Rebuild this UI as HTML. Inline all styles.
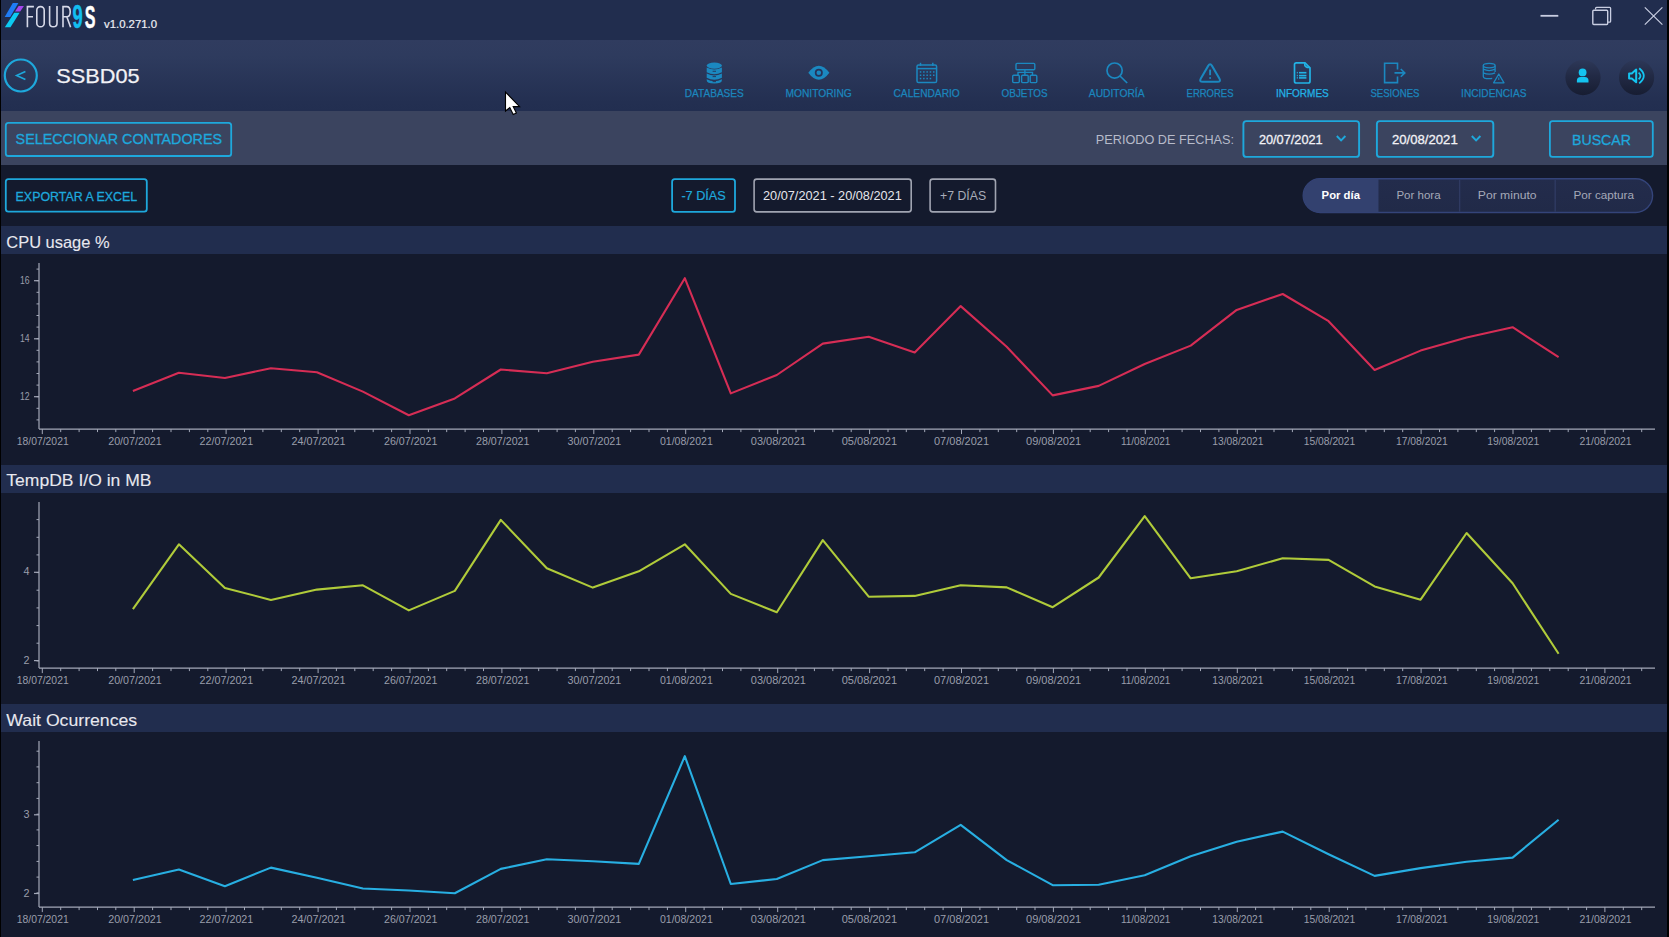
<!DOCTYPE html>
<html><head><meta charset="utf-8"><title>FOUR9S</title>
<style>
html,body{margin:0;padding:0;}
body{width:1669px;height:937px;overflow:hidden;background:#141a2d;position:relative;font-family:"Liberation Sans", sans-serif;}
.abs{position:absolute;}
#titlebar{left:0;top:0;width:1669px;height:40px;background:#212d4e;}
#header{left:0;top:40px;width:1669px;height:71px;background:linear-gradient(#303c5f 0%,#2e3b5e 22%,#232f51 88%,#222e50 100%);}
#toolbar{left:0;top:111px;width:1669px;height:54px;background:#3b445f;}
#dark{left:0;top:165px;width:1669px;height:772px;background:#141a2d;}
.band{left:0;width:1669px;height:28px;background:#212d4e;}
#lb{left:0;top:0;width:1px;height:937px;background:#000;}
#rb{left:1667px;top:0;width:2px;height:937px;background:#000;}
svg text{font-family:"Liberation Sans", sans-serif;}
</style></head><body>
<div class="abs" id="titlebar"></div>
<div class="abs" id="header"></div>
<div class="abs" id="toolbar"></div>
<div class="abs" id="dark"></div>
<div class="abs band" style="top:226px"></div>
<div class="abs band" style="top:465px"></div>
<div class="abs band" style="top:704px"></div>
<svg class="abs" style="left:0;top:0" width="1669" height="937" viewBox="0 0 1669 937">
<polygon points="12.8,3 18.4,3 10.2,17.1 4.7,17.1" fill="#1f7cf5"/>
<polygon points="18.6,6 23.9,6 20.2,11.6 15,11.6" fill="#a646ee"/>
<polygon points="14.2,12.8 19.6,12.8 10.5,27.3 4.8,27.3" fill="#0ccaf2"/>
<g fill="none" stroke="#d6d9e8" stroke-width="1.6"><path d="M27.4,27.2 V6.6 H33.9 M27.4,16.8 H33"/><rect x="36.8" y="6.6" width="7.4" height="20.2" rx="3.6"/><path d="M49.6,6 V23.2 Q49.6,26.8 53.3,26.8 Q57,26.8 57,23.2 V6"/><path d="M63,27.2 V6.6 H66.6 Q70.2,6.6 70.2,11.7 Q70.2,16.8 66.6,16.8 H63 M66.8,16.8 L70.6,27.2"/></g>
<text x="72.6" y="28.2" font-size="32.5" fill="#12bdf0" font-weight="bold" text-anchor="start" textLength="10.2" lengthAdjust="spacingAndGlyphs" stroke="#12bdf0" stroke-width="0.5">9</text>

<text x="84.8" y="27.8" font-size="31" fill="#ffffff" font-weight="bold" text-anchor="start" textLength="10.7" lengthAdjust="spacingAndGlyphs" stroke="#ffffff" stroke-width="0.5">S</text>

<text x="104.0" y="27.5" font-size="11" fill="#eeeff5" font-weight="normal" text-anchor="start" textLength="53.0" lengthAdjust="spacingAndGlyphs" stroke="#eeeff5" stroke-width="0.2">v1.0.271.0</text>

<line x1="1540.5" y1="15.8" x2="1558.3" y2="15.8" stroke="#c9cee2" stroke-width="1.8"/>
<path d="M1595.6,9.6 V8.2 Q1595.6,7.3 1596.5,7.3 H1609.7 Q1610.6,7.3 1610.6,8.2 V21.2 Q1610.6,22.1 1609.7,22.1 H1608" fill="none" stroke="#c9cee2" stroke-width="1.3"/>
<rect x="1592.8" y="10.2" width="14.9" height="14.3" rx="1" fill="none" stroke="#c9cee2" stroke-width="1.4"/>
<path d="M1644.8,7.4 L1662.4,24.6 M1662.4,7.4 L1644.8,24.6" stroke="#c9cee2" stroke-width="1.2"/>
<circle cx="20.8" cy="75.5" r="16" fill="none" stroke="#1ea8dc" stroke-width="2.2"/>
<path d="M25.4,71.4 L16.6,75.5 L25.4,79.5" fill="none" stroke="#1ea8dc" stroke-width="1.6"/>
<text x="56.2" y="83.0" font-size="20.2" fill="#f2f2f6" font-weight="normal" text-anchor="start" textLength="83.4" lengthAdjust="spacingAndGlyphs" stroke="#f2f2f6" stroke-width="0.25">SSBD05</text>

<text x="684.8" y="97.3" font-size="10.6" fill="#1b86bd" font-weight="normal" text-anchor="start" textLength="59.0" lengthAdjust="spacingAndGlyphs" stroke="#1b86bd" stroke-width="0.25">DATABASES</text>

<text x="785.4" y="97.3" font-size="10.6" fill="#1b86bd" font-weight="normal" text-anchor="start" textLength="66.4" lengthAdjust="spacingAndGlyphs" stroke="#1b86bd" stroke-width="0.25">MONITORING</text>

<text x="893.5" y="97.3" font-size="10.6" fill="#1b86bd" font-weight="normal" text-anchor="start" textLength="66.3" lengthAdjust="spacingAndGlyphs" stroke="#1b86bd" stroke-width="0.25">CALENDARIO</text>

<text x="1001.6" y="97.3" font-size="10.6" fill="#1b86bd" font-weight="normal" text-anchor="start" textLength="46.0" lengthAdjust="spacingAndGlyphs" stroke="#1b86bd" stroke-width="0.25">OBJETOS</text>

<text x="1088.8" y="97.3" font-size="10.6" fill="#1b86bd" font-weight="normal" text-anchor="start" textLength="55.8" lengthAdjust="spacingAndGlyphs" stroke="#1b86bd" stroke-width="0.25">AUDITORÍA</text>

<text x="1186.6" y="97.3" font-size="10.6" fill="#1b86bd" font-weight="normal" text-anchor="start" textLength="46.9" lengthAdjust="spacingAndGlyphs" stroke="#1b86bd" stroke-width="0.25">ERRORES</text>

<text x="1275.9" y="97.3" font-size="10.6" fill="#22b3e6" font-weight="normal" text-anchor="start" textLength="52.9" lengthAdjust="spacingAndGlyphs" stroke="#22b3e6" stroke-width="0.25">INFORMES</text>

<text x="1370.4" y="97.3" font-size="10.6" fill="#1b86bd" font-weight="normal" text-anchor="start" textLength="49.1" lengthAdjust="spacingAndGlyphs" stroke="#1b86bd" stroke-width="0.25">SESIONES</text>

<text x="1461.1" y="97.3" font-size="10.6" fill="#1b86bd" font-weight="normal" text-anchor="start" textLength="65.3" lengthAdjust="spacingAndGlyphs" stroke="#1b86bd" stroke-width="0.25">INCIDENCIAS</text>

<g fill="#1b88c0"><ellipse cx="714.3" cy="65.6" rx="7.6" ry="3.1"/><path d="M706.7,67.6 Q714.3,71.6 721.9,67.6 V72.2 Q714.3,76.2 706.7,72.2 Z"/><path d="M706.7,73.6 Q714.3,77.6 721.9,73.6 V77.8 Q714.3,81.8 706.7,77.8 Z"/><path d="M706.7,79.2 Q714.3,83.2 721.9,79.2 V80.2 Q721.9,83.4 714.3,83.4 Q706.7,83.4 706.7,80.2 Z"/></g>
<g fill="#253256"><rect x="712.6" y="70.8" width="3.4" height="0.9"/><rect x="712.6" y="76.2" width="3.4" height="0.9"/><rect x="712.6" y="81.2" width="3.4" height="0.9"/></g>
<path d="M808.3,72.7 Q818.8,58.6 829.4,72.7 Q818.8,86.8 808.3,72.7 Z" fill="#1b88c0"/>
<circle cx="818.8" cy="72.7" r="4" fill="#26335a"/>
<circle cx="818.8" cy="72.7" r="2.3" fill="#1b88c0"/>
<g fill="none" stroke="#1b88c0" stroke-width="1.5"><rect x="917" y="65" width="19.6" height="17.6" rx="1.6"/><line x1="917" y1="68.6" x2="936.6" y2="68.6"/><line x1="920.5" y1="62.8" x2="920.5" y2="66"/><line x1="932.8" y1="62.8" x2="932.8" y2="66"/></g>
<g fill="#1b88c0"><rect x="919.8" y="71.2" width="1.5" height="1.5"/><rect x="923.1" y="71.2" width="1.5" height="1.5"/><rect x="926.4" y="71.2" width="1.5" height="1.5"/><rect x="929.7" y="71.2" width="1.5" height="1.5"/><rect x="933.0" y="71.2" width="1.5" height="1.5"/><rect x="919.8" y="74.5" width="1.5" height="1.5"/><rect x="923.1" y="74.5" width="1.5" height="1.5"/><rect x="926.4" y="74.5" width="1.5" height="1.5"/><rect x="929.7" y="74.5" width="1.5" height="1.5"/><rect x="933.0" y="74.5" width="1.5" height="1.5"/><rect x="919.8" y="77.8" width="1.5" height="1.5"/><rect x="923.1" y="77.8" width="1.5" height="1.5"/><rect x="926.4" y="77.8" width="1.5" height="1.5"/><rect x="929.7" y="77.8" width="1.5" height="1.5"/></g>
<g fill="none" stroke="#1b88c0" stroke-width="1.4"><rect x="1016" y="63.4" width="18.8" height="6.4" rx="1"/><path d="M1024.9,69.8 V72.4 M1018,75.2 V72.4 H1032.5 V75.2 M1024.9,72.4 V75.2"/><rect x="1012.7" y="75.2" width="6.6" height="7.4" rx="1"/><rect x="1021.6" y="75.2" width="6.6" height="7.4" rx="1"/><rect x="1030.2" y="75.2" width="6.6" height="7.4" rx="1"/></g>
<g fill="none" stroke="#1b88c0" stroke-width="1.7"><circle cx="1114.6" cy="70.6" r="7.6"/><line x1="1120" y1="76" x2="1127.2" y2="83"/></g>
<path d="M1208.18,65.88 Q1210.10,62.60 1212.02,65.88 L1219.38,78.42 Q1221.30,81.70 1217.50,81.70 L1202.70,81.70 Q1198.90,81.70 1200.82,78.42 Z" fill="none" stroke="#1b88c0" stroke-width="2" stroke-linejoin="round"/>
<line x1="1210.1" y1="69.6" x2="1210.1" y2="75.2" stroke="#1b88c0" stroke-width="1.9"/><circle cx="1210.1" cy="77.9" r="1" fill="#1b88c0"/>
<path d="M1296.3,62.8 H1305 L1310,67.8 V81.2 Q1310,83 1308.2,83 H1296.3 Q1294.5,83 1294.5,81.2 V64.6 Q1294.5,62.8 1296.3,62.8 Z" fill="none" stroke="#22b3e6" stroke-width="1.7"/>
<g fill="#22b3e6"><rect x="1299" y="71.9" width="7.4" height="1.6"/><rect x="1299" y="74.8" width="7.4" height="1.6"/><rect x="1299" y="77.1" width="7.4" height="1.6"/><rect x="1296.8" y="71.9" width="1" height="1.5"/><rect x="1296.8" y="74.8" width="1" height="1.5"/><rect x="1296.8" y="77.1" width="1" height="1.5"/></g><path d="M1304.6,63.2 Q1304.2,67.8 1309.8,67.6" fill="none" stroke="#22b3e6" stroke-width="1.5"/>
<g fill="none" stroke="#1b88c0" stroke-width="1.6"><path d="M1397.5,69.6 V63.2 H1384.6 V82.6 H1397.5 V76.4"/><path d="M1394.5,72.9 H1404.6 M1400.8,69 L1404.8,72.9 L1400.8,76.8"/></g>
<g fill="none" stroke="#1b88c0" stroke-width="1.3"><ellipse cx="1489.2" cy="65.6" rx="5.9" ry="2.2"/><path d="M1483.3,65.6 V76.4 Q1483.3,78.6 1489.2,78.6 Q1491,78.6 1492.2,78.3 M1495.1,65.6 V72 M1483.3,69.2 Q1489.2,72 1495.1,69.2 M1483.3,72.8 Q1489.2,75.6 1495.1,72.8"/><path d="M1498.8,74 L1504,82.8 H1493.6 Z" stroke-linejoin="round"/></g>
<line x1="1498.8" y1="77.4" x2="1498.8" y2="80" stroke="#1b88c0" stroke-width="1"/>
<defs><linearGradient id="rb" x1="0" y1="0" x2="0" y2="1"><stop offset="0" stop-color="#2d3858"/><stop offset="0.45" stop-color="#222a45"/><stop offset="1" stop-color="#171d32"/></linearGradient><linearGradient id="seg" x1="0" y1="0" x2="0" y2="1"><stop offset="0" stop-color="#232c4c"/><stop offset="1" stop-color="#212a48"/></linearGradient></defs>
<circle cx="1583" cy="77.6" r="17.6" fill="url(#rb)"/>
<circle cx="1636.6" cy="77.5" r="17.6" fill="url(#rb)"/>
<circle cx="1582.6" cy="72.4" r="3.9" fill="#14c4f0"/>
<path d="M1576.9,82.4 V80.6 Q1576.9,77 1580.6,77 H1584.8 Q1588.5,77 1588.5,80.6 V82.4 Z" fill="#14c4f0"/>
<path d="M1629.1,73.4 H1631.8 L1636.2,69.6 V82.2 L1631.8,78.4 H1629.1 Z" fill="none" stroke="#14c4f0" stroke-width="2" stroke-linejoin="round"/>
<path d="M1638.6,72.6 Q1642.4,75.9 1638.6,79.2 M1639.2,68.2 Q1648.4,75.9 1639.2,83.4" fill="none" stroke="#14c4f0" stroke-width="1.8"/>
<rect x="5.8" y="122.8" width="225.4" height="33.2" rx="2.6" fill="none" stroke="#1ea8dc" stroke-width="1.8"/>
<text x="15.6" y="144.2" font-size="14.6" fill="#1ea8dc" font-weight="normal" text-anchor="start" textLength="206.4" lengthAdjust="spacingAndGlyphs" stroke="#1ea8dc" stroke-width="0.3">SELECCIONAR CONTADORES</text>

<text x="1095.8" y="143.6" font-size="12.6" fill="#b7bbca" font-weight="normal" text-anchor="start" textLength="138.2" lengthAdjust="spacingAndGlyphs">PERIODO DE FECHAS:</text>

<rect x="1243.4" y="121.1" width="115.7" height="35.8" rx="3" fill="none" stroke="#1ea8dc" stroke-width="1.9"/>
<text x="1258.9" y="143.6" font-size="13.4" fill="#f2f2f6" font-weight="normal" text-anchor="start" textLength="63.8" lengthAdjust="spacingAndGlyphs" stroke="#f2f2f6" stroke-width="0.3">20/07/2021</text>

<path d="M1336.8,136 L1341.1,140.4 L1345.4,136" fill="none" stroke="#1ea8dc" stroke-width="1.9"/>
<rect x="1376.9" y="121.1" width="116.4" height="35.8" rx="3" fill="none" stroke="#1ea8dc" stroke-width="1.9"/>
<text x="1392.0" y="143.6" font-size="13.4" fill="#f2f2f6" font-weight="normal" text-anchor="start" textLength="65.7" lengthAdjust="spacingAndGlyphs" stroke="#f2f2f6" stroke-width="0.3">20/08/2021</text>

<path d="M1471.8,136 L1476.1,140.4 L1480.4,136" fill="none" stroke="#1ea8dc" stroke-width="1.9"/>
<rect x="1549.9" y="121.1" width="102.9" height="35.8" rx="2.6" fill="none" stroke="#1ea8dc" stroke-width="1.8"/>
<text x="1572.0" y="144.6" font-size="15" fill="#1ea8dc" font-weight="normal" text-anchor="start" textLength="59.0" lengthAdjust="spacingAndGlyphs" stroke="#1ea8dc" stroke-width="0.3">BUSCAR</text>

<rect x="5.8" y="179.1" width="141" height="32.6" rx="2.6" fill="none" stroke="#1ea8dc" stroke-width="1.8"/>
<text x="15.6" y="200.8" font-size="13.6" fill="#1ea8dc" font-weight="normal" text-anchor="start" textLength="121.5" lengthAdjust="spacingAndGlyphs" stroke="#1ea8dc" stroke-width="0.3">EXPORTAR A EXCEL</text>

<rect x="672.1" y="179.1" width="62.9" height="32.8" rx="2.6" fill="none" stroke="#1ea8dc" stroke-width="1.8"/>
<text x="681.4" y="200.3" font-size="12.6" fill="#1ea8dc" font-weight="normal" text-anchor="start" textLength="44.4" lengthAdjust="spacingAndGlyphs" stroke="#1ea8dc" stroke-width="0.2">-7 DÍAS</text>

<rect x="754.1" y="179.1" width="157.1" height="32.8" rx="2.6" fill="none" stroke="#a0a4b1" stroke-width="1.6"/>
<text x="763.0" y="200.3" font-size="12.6" fill="#e6e6ec" font-weight="normal" text-anchor="start" textLength="138.8" lengthAdjust="spacingAndGlyphs">20/07/2021 - 20/08/2021</text>

<rect x="930.1" y="179.1" width="65.4" height="32.8" rx="2.6" fill="none" stroke="#a0a4b1" stroke-width="1.6"/>
<text x="940.1" y="200.3" font-size="12.6" fill="#a9adb9" font-weight="normal" text-anchor="start" textLength="46.0" lengthAdjust="spacingAndGlyphs">+7 DÍAS</text>

<rect x="1303.2" y="178.7" width="349.4" height="33.8" rx="16.9" fill="url(#seg)" stroke="#34447a" stroke-width="1.4"/>
<path d="M1378.5,178.7 H1320 A16.9,16.9 0 0 0 1320,212.5 H1378.5 Z" fill="#33416f"/>
<g stroke="#2f3a62" stroke-width="1.4"><line x1="1459.6" y1="179.4" x2="1459.6" y2="211.8"/><line x1="1555.2" y1="179.4" x2="1555.2" y2="211.8"/></g>
<text x="1321.6" y="199.4" font-size="11.4" fill="#ffffff" font-weight="bold" text-anchor="start" textLength="38.4" lengthAdjust="spacingAndGlyphs">Por día</text>

<text x="1396.4" y="199.4" font-size="11.4" fill="#a5a9b8" font-weight="normal" text-anchor="start" textLength="44.2" lengthAdjust="spacingAndGlyphs">Por hora</text>

<text x="1477.8" y="199.4" font-size="11.4" fill="#a5a9b8" font-weight="normal" text-anchor="start" textLength="58.8" lengthAdjust="spacingAndGlyphs">Por minuto</text>

<text x="1573.4" y="199.4" font-size="11.4" fill="#a5a9b8" font-weight="normal" text-anchor="start" textLength="60.6" lengthAdjust="spacingAndGlyphs">Por captura</text>

<text x="6.3" y="247.6" font-size="16.5" fill="#e8e8ef" font-weight="normal" text-anchor="start" textLength="103.3" lengthAdjust="spacingAndGlyphs" stroke="#e8e8ef" stroke-width="0.1">CPU usage %</text>
<line x1="39.0" y1="263" x2="39.0" y2="429.1" stroke="#a3a8b8" stroke-width="1.2"/>
<line x1="36.5" y1="269.1" x2="39.0" y2="269.1" stroke="#a3a8b8" stroke-width="1"/>
<line x1="36.5" y1="280.7" x2="39.0" y2="280.7" stroke="#a3a8b8" stroke-width="1"/>
<line x1="36.5" y1="292.3" x2="39.0" y2="292.3" stroke="#a3a8b8" stroke-width="1"/>
<line x1="36.5" y1="303.9" x2="39.0" y2="303.9" stroke="#a3a8b8" stroke-width="1"/>
<line x1="36.5" y1="315.5" x2="39.0" y2="315.5" stroke="#a3a8b8" stroke-width="1"/>
<line x1="36.5" y1="327.1" x2="39.0" y2="327.1" stroke="#a3a8b8" stroke-width="1"/>
<line x1="36.5" y1="338.7" x2="39.0" y2="338.7" stroke="#a3a8b8" stroke-width="1"/>
<line x1="36.5" y1="350.3" x2="39.0" y2="350.3" stroke="#a3a8b8" stroke-width="1"/>
<line x1="36.5" y1="361.9" x2="39.0" y2="361.9" stroke="#a3a8b8" stroke-width="1"/>
<line x1="36.5" y1="373.5" x2="39.0" y2="373.5" stroke="#a3a8b8" stroke-width="1"/>
<line x1="36.5" y1="385.1" x2="39.0" y2="385.1" stroke="#a3a8b8" stroke-width="1"/>
<line x1="36.5" y1="396.7" x2="39.0" y2="396.7" stroke="#a3a8b8" stroke-width="1"/>
<line x1="36.5" y1="408.3" x2="39.0" y2="408.3" stroke="#a3a8b8" stroke-width="1"/>
<line x1="36.5" y1="419.9" x2="39.0" y2="419.9" stroke="#a3a8b8" stroke-width="1"/>
<line x1="34.0" y1="280.7" x2="39.0" y2="280.7" stroke="#a3a8b8" stroke-width="1.2"/>
<text x="20.0" y="283.7" font-size="10.5" fill="#9a9eab" font-weight="normal" text-anchor="start" textLength="9.6" lengthAdjust="spacingAndGlyphs">16</text>
<line x1="34.0" y1="338.8" x2="39.0" y2="338.8" stroke="#a3a8b8" stroke-width="1.2"/>
<text x="20.0" y="341.8" font-size="10.5" fill="#9a9eab" font-weight="normal" text-anchor="start" textLength="9.6" lengthAdjust="spacingAndGlyphs">14</text>
<line x1="34.0" y1="396.7" x2="39.0" y2="396.7" stroke="#a3a8b8" stroke-width="1.2"/>
<text x="20.0" y="399.7" font-size="10.5" fill="#9a9eab" font-weight="normal" text-anchor="start" textLength="9.6" lengthAdjust="spacingAndGlyphs">12</text>
<line x1="39.0" y1="429.1" x2="1655" y2="429.1" stroke="#a3a8b8" stroke-width="1.4"/>
<line x1="42.3" y1="429.1" x2="42.3" y2="434.1" stroke="#a3a8b8" stroke-width="1"/>
<line x1="60.7" y1="429.1" x2="60.7" y2="432.1" stroke="#a3a8b8" stroke-width="1"/>
<line x1="79.1" y1="429.1" x2="79.1" y2="432.1" stroke="#a3a8b8" stroke-width="1"/>
<line x1="97.5" y1="429.1" x2="97.5" y2="432.1" stroke="#a3a8b8" stroke-width="1"/>
<line x1="115.8" y1="429.1" x2="115.8" y2="432.1" stroke="#a3a8b8" stroke-width="1"/>
<line x1="134.2" y1="429.1" x2="134.2" y2="434.1" stroke="#a3a8b8" stroke-width="1"/>
<line x1="152.6" y1="429.1" x2="152.6" y2="432.1" stroke="#a3a8b8" stroke-width="1"/>
<line x1="171.0" y1="429.1" x2="171.0" y2="432.1" stroke="#a3a8b8" stroke-width="1"/>
<line x1="189.4" y1="429.1" x2="189.4" y2="432.1" stroke="#a3a8b8" stroke-width="1"/>
<line x1="207.8" y1="429.1" x2="207.8" y2="432.1" stroke="#a3a8b8" stroke-width="1"/>
<line x1="226.1" y1="429.1" x2="226.1" y2="434.1" stroke="#a3a8b8" stroke-width="1"/>
<line x1="244.5" y1="429.1" x2="244.5" y2="432.1" stroke="#a3a8b8" stroke-width="1"/>
<line x1="262.9" y1="429.1" x2="262.9" y2="432.1" stroke="#a3a8b8" stroke-width="1"/>
<line x1="281.3" y1="429.1" x2="281.3" y2="432.1" stroke="#a3a8b8" stroke-width="1"/>
<line x1="299.7" y1="429.1" x2="299.7" y2="432.1" stroke="#a3a8b8" stroke-width="1"/>
<line x1="318.1" y1="429.1" x2="318.1" y2="434.1" stroke="#a3a8b8" stroke-width="1"/>
<line x1="336.4" y1="429.1" x2="336.4" y2="432.1" stroke="#a3a8b8" stroke-width="1"/>
<line x1="354.8" y1="429.1" x2="354.8" y2="432.1" stroke="#a3a8b8" stroke-width="1"/>
<line x1="373.2" y1="429.1" x2="373.2" y2="432.1" stroke="#a3a8b8" stroke-width="1"/>
<line x1="391.6" y1="429.1" x2="391.6" y2="432.1" stroke="#a3a8b8" stroke-width="1"/>
<line x1="410.0" y1="429.1" x2="410.0" y2="434.1" stroke="#a3a8b8" stroke-width="1"/>
<line x1="428.4" y1="429.1" x2="428.4" y2="432.1" stroke="#a3a8b8" stroke-width="1"/>
<line x1="446.7" y1="429.1" x2="446.7" y2="432.1" stroke="#a3a8b8" stroke-width="1"/>
<line x1="465.1" y1="429.1" x2="465.1" y2="432.1" stroke="#a3a8b8" stroke-width="1"/>
<line x1="483.5" y1="429.1" x2="483.5" y2="432.1" stroke="#a3a8b8" stroke-width="1"/>
<line x1="501.9" y1="429.1" x2="501.9" y2="434.1" stroke="#a3a8b8" stroke-width="1"/>
<line x1="520.3" y1="429.1" x2="520.3" y2="432.1" stroke="#a3a8b8" stroke-width="1"/>
<line x1="538.7" y1="429.1" x2="538.7" y2="432.1" stroke="#a3a8b8" stroke-width="1"/>
<line x1="557.1" y1="429.1" x2="557.1" y2="432.1" stroke="#a3a8b8" stroke-width="1"/>
<line x1="575.4" y1="429.1" x2="575.4" y2="432.1" stroke="#a3a8b8" stroke-width="1"/>
<line x1="593.8" y1="429.1" x2="593.8" y2="434.1" stroke="#a3a8b8" stroke-width="1"/>
<line x1="612.2" y1="429.1" x2="612.2" y2="432.1" stroke="#a3a8b8" stroke-width="1"/>
<line x1="630.6" y1="429.1" x2="630.6" y2="432.1" stroke="#a3a8b8" stroke-width="1"/>
<line x1="649.0" y1="429.1" x2="649.0" y2="432.1" stroke="#a3a8b8" stroke-width="1"/>
<line x1="667.4" y1="429.1" x2="667.4" y2="432.1" stroke="#a3a8b8" stroke-width="1"/>
<line x1="685.7" y1="429.1" x2="685.7" y2="434.1" stroke="#a3a8b8" stroke-width="1"/>
<line x1="704.1" y1="429.1" x2="704.1" y2="432.1" stroke="#a3a8b8" stroke-width="1"/>
<line x1="722.5" y1="429.1" x2="722.5" y2="432.1" stroke="#a3a8b8" stroke-width="1"/>
<line x1="740.9" y1="429.1" x2="740.9" y2="432.1" stroke="#a3a8b8" stroke-width="1"/>
<line x1="759.3" y1="429.1" x2="759.3" y2="432.1" stroke="#a3a8b8" stroke-width="1"/>
<line x1="777.7" y1="429.1" x2="777.7" y2="434.1" stroke="#a3a8b8" stroke-width="1"/>
<line x1="796.0" y1="429.1" x2="796.0" y2="432.1" stroke="#a3a8b8" stroke-width="1"/>
<line x1="814.4" y1="429.1" x2="814.4" y2="432.1" stroke="#a3a8b8" stroke-width="1"/>
<line x1="832.8" y1="429.1" x2="832.8" y2="432.1" stroke="#a3a8b8" stroke-width="1"/>
<line x1="851.2" y1="429.1" x2="851.2" y2="432.1" stroke="#a3a8b8" stroke-width="1"/>
<line x1="869.6" y1="429.1" x2="869.6" y2="434.1" stroke="#a3a8b8" stroke-width="1"/>
<line x1="888.0" y1="429.1" x2="888.0" y2="432.1" stroke="#a3a8b8" stroke-width="1"/>
<line x1="906.3" y1="429.1" x2="906.3" y2="432.1" stroke="#a3a8b8" stroke-width="1"/>
<line x1="924.7" y1="429.1" x2="924.7" y2="432.1" stroke="#a3a8b8" stroke-width="1"/>
<line x1="943.1" y1="429.1" x2="943.1" y2="432.1" stroke="#a3a8b8" stroke-width="1"/>
<line x1="961.5" y1="429.1" x2="961.5" y2="434.1" stroke="#a3a8b8" stroke-width="1"/>
<line x1="979.9" y1="429.1" x2="979.9" y2="432.1" stroke="#a3a8b8" stroke-width="1"/>
<line x1="998.3" y1="429.1" x2="998.3" y2="432.1" stroke="#a3a8b8" stroke-width="1"/>
<line x1="1016.7" y1="429.1" x2="1016.7" y2="432.1" stroke="#a3a8b8" stroke-width="1"/>
<line x1="1035.0" y1="429.1" x2="1035.0" y2="432.1" stroke="#a3a8b8" stroke-width="1"/>
<line x1="1053.4" y1="429.1" x2="1053.4" y2="434.1" stroke="#a3a8b8" stroke-width="1"/>
<line x1="1071.8" y1="429.1" x2="1071.8" y2="432.1" stroke="#a3a8b8" stroke-width="1"/>
<line x1="1090.2" y1="429.1" x2="1090.2" y2="432.1" stroke="#a3a8b8" stroke-width="1"/>
<line x1="1108.6" y1="429.1" x2="1108.6" y2="432.1" stroke="#a3a8b8" stroke-width="1"/>
<line x1="1127.0" y1="429.1" x2="1127.0" y2="432.1" stroke="#a3a8b8" stroke-width="1"/>
<line x1="1145.3" y1="429.1" x2="1145.3" y2="434.1" stroke="#a3a8b8" stroke-width="1"/>
<line x1="1163.7" y1="429.1" x2="1163.7" y2="432.1" stroke="#a3a8b8" stroke-width="1"/>
<line x1="1182.1" y1="429.1" x2="1182.1" y2="432.1" stroke="#a3a8b8" stroke-width="1"/>
<line x1="1200.5" y1="429.1" x2="1200.5" y2="432.1" stroke="#a3a8b8" stroke-width="1"/>
<line x1="1218.9" y1="429.1" x2="1218.9" y2="432.1" stroke="#a3a8b8" stroke-width="1"/>
<line x1="1237.3" y1="429.1" x2="1237.3" y2="434.1" stroke="#a3a8b8" stroke-width="1"/>
<line x1="1255.6" y1="429.1" x2="1255.6" y2="432.1" stroke="#a3a8b8" stroke-width="1"/>
<line x1="1274.0" y1="429.1" x2="1274.0" y2="432.1" stroke="#a3a8b8" stroke-width="1"/>
<line x1="1292.4" y1="429.1" x2="1292.4" y2="432.1" stroke="#a3a8b8" stroke-width="1"/>
<line x1="1310.8" y1="429.1" x2="1310.8" y2="432.1" stroke="#a3a8b8" stroke-width="1"/>
<line x1="1329.2" y1="429.1" x2="1329.2" y2="434.1" stroke="#a3a8b8" stroke-width="1"/>
<line x1="1347.6" y1="429.1" x2="1347.6" y2="432.1" stroke="#a3a8b8" stroke-width="1"/>
<line x1="1365.9" y1="429.1" x2="1365.9" y2="432.1" stroke="#a3a8b8" stroke-width="1"/>
<line x1="1384.3" y1="429.1" x2="1384.3" y2="432.1" stroke="#a3a8b8" stroke-width="1"/>
<line x1="1402.7" y1="429.1" x2="1402.7" y2="432.1" stroke="#a3a8b8" stroke-width="1"/>
<line x1="1421.1" y1="429.1" x2="1421.1" y2="434.1" stroke="#a3a8b8" stroke-width="1"/>
<line x1="1439.5" y1="429.1" x2="1439.5" y2="432.1" stroke="#a3a8b8" stroke-width="1"/>
<line x1="1457.9" y1="429.1" x2="1457.9" y2="432.1" stroke="#a3a8b8" stroke-width="1"/>
<line x1="1476.3" y1="429.1" x2="1476.3" y2="432.1" stroke="#a3a8b8" stroke-width="1"/>
<line x1="1494.6" y1="429.1" x2="1494.6" y2="432.1" stroke="#a3a8b8" stroke-width="1"/>
<line x1="1513.0" y1="429.1" x2="1513.0" y2="434.1" stroke="#a3a8b8" stroke-width="1"/>
<line x1="1531.4" y1="429.1" x2="1531.4" y2="432.1" stroke="#a3a8b8" stroke-width="1"/>
<line x1="1549.8" y1="429.1" x2="1549.8" y2="432.1" stroke="#a3a8b8" stroke-width="1"/>
<line x1="1568.2" y1="429.1" x2="1568.2" y2="432.1" stroke="#a3a8b8" stroke-width="1"/>
<line x1="1586.6" y1="429.1" x2="1586.6" y2="432.1" stroke="#a3a8b8" stroke-width="1"/>
<line x1="1604.9" y1="429.1" x2="1604.9" y2="434.1" stroke="#a3a8b8" stroke-width="1"/>
<line x1="1623.3" y1="429.1" x2="1623.3" y2="432.1" stroke="#a3a8b8" stroke-width="1"/>
<line x1="1641.7" y1="429.1" x2="1641.7" y2="432.1" stroke="#a3a8b8" stroke-width="1"/>
<text x="16.7" y="445.0" font-size="11" fill="#9a9eab" font-weight="normal" text-anchor="start" textLength="52.0" lengthAdjust="spacingAndGlyphs">18/07/2021</text>
<text x="108.2" y="445.0" font-size="11" fill="#9a9eab" font-weight="normal" text-anchor="start" textLength="53.6" lengthAdjust="spacingAndGlyphs">20/07/2021</text>
<text x="199.6" y="445.0" font-size="11" fill="#9a9eab" font-weight="normal" text-anchor="start" textLength="53.7" lengthAdjust="spacingAndGlyphs">22/07/2021</text>
<text x="291.4" y="445.0" font-size="11" fill="#9a9eab" font-weight="normal" text-anchor="start" textLength="54.0" lengthAdjust="spacingAndGlyphs">24/07/2021</text>
<text x="384.0" y="445.0" font-size="11" fill="#9a9eab" font-weight="normal" text-anchor="start" textLength="53.4" lengthAdjust="spacingAndGlyphs">26/07/2021</text>
<text x="476.0" y="445.0" font-size="11" fill="#9a9eab" font-weight="normal" text-anchor="start" textLength="53.5" lengthAdjust="spacingAndGlyphs">28/07/2021</text>
<text x="567.6" y="445.0" font-size="11" fill="#9a9eab" font-weight="normal" text-anchor="start" textLength="53.7" lengthAdjust="spacingAndGlyphs">30/07/2021</text>
<text x="659.9" y="445.0" font-size="11" fill="#9a9eab" font-weight="normal" text-anchor="start" textLength="52.9" lengthAdjust="spacingAndGlyphs">01/08/2021</text>
<text x="750.8" y="445.0" font-size="11" fill="#9a9eab" font-weight="normal" text-anchor="start" textLength="55.1" lengthAdjust="spacingAndGlyphs">03/08/2021</text>
<text x="841.7" y="445.0" font-size="11" fill="#9a9eab" font-weight="normal" text-anchor="start" textLength="55.4" lengthAdjust="spacingAndGlyphs">05/08/2021</text>
<text x="934.0" y="445.0" font-size="11" fill="#9a9eab" font-weight="normal" text-anchor="start" textLength="55.0" lengthAdjust="spacingAndGlyphs">07/08/2021</text>
<text x="1026.0" y="445.0" font-size="11" fill="#9a9eab" font-weight="normal" text-anchor="start" textLength="55.2" lengthAdjust="spacingAndGlyphs">09/08/2021</text>
<text x="1120.9" y="445.0" font-size="11" fill="#9a9eab" font-weight="normal" text-anchor="start" textLength="49.5" lengthAdjust="spacingAndGlyphs">11/08/2021</text>
<text x="1212.3" y="445.0" font-size="11" fill="#9a9eab" font-weight="normal" text-anchor="start" textLength="51.2" lengthAdjust="spacingAndGlyphs">13/08/2021</text>
<text x="1303.8" y="445.0" font-size="11" fill="#9a9eab" font-weight="normal" text-anchor="start" textLength="51.5" lengthAdjust="spacingAndGlyphs">15/08/2021</text>
<text x="1395.9" y="445.0" font-size="11" fill="#9a9eab" font-weight="normal" text-anchor="start" textLength="51.8" lengthAdjust="spacingAndGlyphs">17/08/2021</text>
<text x="1487.3" y="445.0" font-size="11" fill="#9a9eab" font-weight="normal" text-anchor="start" textLength="52.0" lengthAdjust="spacingAndGlyphs">19/08/2021</text>
<text x="1579.4" y="445.0" font-size="11" fill="#9a9eab" font-weight="normal" text-anchor="start" textLength="52.2" lengthAdjust="spacingAndGlyphs">21/08/2021</text>
<polyline points="132.9,391.1 178.9,372.8 224.9,378.0 270.9,368.2 316.9,372.3 362.9,391.6 408.8,415.3 454.8,398.4 500.8,369.5 546.8,373.3 592.8,361.7 638.8,354.6 684.8,278.2 730.8,393.4 776.8,375.0 822.8,343.6 868.7,336.8 914.7,352.4 960.7,306.1 1006.7,346.8 1052.7,395.4 1098.7,385.9 1144.7,364.0 1190.7,345.6 1236.7,309.9 1282.7,294.0 1328.6,321.2 1374.6,370.0 1420.6,350.6 1466.6,337.5 1512.6,327.2 1558.6,357.2" fill="none" stroke="#d62d55" stroke-width="2.1" stroke-linejoin="round"/>

<text x="6.3" y="486.1" font-size="16.5" fill="#e8e8ef" font-weight="normal" text-anchor="start" textLength="145.2" lengthAdjust="spacingAndGlyphs" stroke="#e8e8ef" stroke-width="0.1">TempDB I/O in MB</text>
<line x1="39.0" y1="502" x2="39.0" y2="668.1" stroke="#a3a8b8" stroke-width="1.2"/>
<line x1="36.5" y1="519.6" x2="39.0" y2="519.6" stroke="#a3a8b8" stroke-width="1"/>
<line x1="36.5" y1="537.3" x2="39.0" y2="537.3" stroke="#a3a8b8" stroke-width="1"/>
<line x1="36.5" y1="554.9" x2="39.0" y2="554.9" stroke="#a3a8b8" stroke-width="1"/>
<line x1="36.5" y1="572.6" x2="39.0" y2="572.6" stroke="#a3a8b8" stroke-width="1"/>
<line x1="36.5" y1="590.2" x2="39.0" y2="590.2" stroke="#a3a8b8" stroke-width="1"/>
<line x1="36.5" y1="607.9" x2="39.0" y2="607.9" stroke="#a3a8b8" stroke-width="1"/>
<line x1="36.5" y1="625.6" x2="39.0" y2="625.6" stroke="#a3a8b8" stroke-width="1"/>
<line x1="36.5" y1="643.2" x2="39.0" y2="643.2" stroke="#a3a8b8" stroke-width="1"/>
<line x1="36.5" y1="660.9" x2="39.0" y2="660.9" stroke="#a3a8b8" stroke-width="1"/>
<line x1="34.0" y1="572.3" x2="39.0" y2="572.3" stroke="#a3a8b8" stroke-width="1.2"/>
<text x="23.6" y="575.3" font-size="10.5" fill="#9a9eab" font-weight="normal" text-anchor="start" textLength="6.0" lengthAdjust="spacingAndGlyphs">4</text>
<line x1="34.0" y1="660.6" x2="39.0" y2="660.6" stroke="#a3a8b8" stroke-width="1.2"/>
<text x="23.6" y="663.6" font-size="10.5" fill="#9a9eab" font-weight="normal" text-anchor="start" textLength="6.0" lengthAdjust="spacingAndGlyphs">2</text>
<line x1="39.0" y1="668.1" x2="1655" y2="668.1" stroke="#a3a8b8" stroke-width="1.4"/>
<line x1="42.3" y1="668.1" x2="42.3" y2="673.1" stroke="#a3a8b8" stroke-width="1"/>
<line x1="60.7" y1="668.1" x2="60.7" y2="671.1" stroke="#a3a8b8" stroke-width="1"/>
<line x1="79.1" y1="668.1" x2="79.1" y2="671.1" stroke="#a3a8b8" stroke-width="1"/>
<line x1="97.5" y1="668.1" x2="97.5" y2="671.1" stroke="#a3a8b8" stroke-width="1"/>
<line x1="115.8" y1="668.1" x2="115.8" y2="671.1" stroke="#a3a8b8" stroke-width="1"/>
<line x1="134.2" y1="668.1" x2="134.2" y2="673.1" stroke="#a3a8b8" stroke-width="1"/>
<line x1="152.6" y1="668.1" x2="152.6" y2="671.1" stroke="#a3a8b8" stroke-width="1"/>
<line x1="171.0" y1="668.1" x2="171.0" y2="671.1" stroke="#a3a8b8" stroke-width="1"/>
<line x1="189.4" y1="668.1" x2="189.4" y2="671.1" stroke="#a3a8b8" stroke-width="1"/>
<line x1="207.8" y1="668.1" x2="207.8" y2="671.1" stroke="#a3a8b8" stroke-width="1"/>
<line x1="226.1" y1="668.1" x2="226.1" y2="673.1" stroke="#a3a8b8" stroke-width="1"/>
<line x1="244.5" y1="668.1" x2="244.5" y2="671.1" stroke="#a3a8b8" stroke-width="1"/>
<line x1="262.9" y1="668.1" x2="262.9" y2="671.1" stroke="#a3a8b8" stroke-width="1"/>
<line x1="281.3" y1="668.1" x2="281.3" y2="671.1" stroke="#a3a8b8" stroke-width="1"/>
<line x1="299.7" y1="668.1" x2="299.7" y2="671.1" stroke="#a3a8b8" stroke-width="1"/>
<line x1="318.1" y1="668.1" x2="318.1" y2="673.1" stroke="#a3a8b8" stroke-width="1"/>
<line x1="336.4" y1="668.1" x2="336.4" y2="671.1" stroke="#a3a8b8" stroke-width="1"/>
<line x1="354.8" y1="668.1" x2="354.8" y2="671.1" stroke="#a3a8b8" stroke-width="1"/>
<line x1="373.2" y1="668.1" x2="373.2" y2="671.1" stroke="#a3a8b8" stroke-width="1"/>
<line x1="391.6" y1="668.1" x2="391.6" y2="671.1" stroke="#a3a8b8" stroke-width="1"/>
<line x1="410.0" y1="668.1" x2="410.0" y2="673.1" stroke="#a3a8b8" stroke-width="1"/>
<line x1="428.4" y1="668.1" x2="428.4" y2="671.1" stroke="#a3a8b8" stroke-width="1"/>
<line x1="446.7" y1="668.1" x2="446.7" y2="671.1" stroke="#a3a8b8" stroke-width="1"/>
<line x1="465.1" y1="668.1" x2="465.1" y2="671.1" stroke="#a3a8b8" stroke-width="1"/>
<line x1="483.5" y1="668.1" x2="483.5" y2="671.1" stroke="#a3a8b8" stroke-width="1"/>
<line x1="501.9" y1="668.1" x2="501.9" y2="673.1" stroke="#a3a8b8" stroke-width="1"/>
<line x1="520.3" y1="668.1" x2="520.3" y2="671.1" stroke="#a3a8b8" stroke-width="1"/>
<line x1="538.7" y1="668.1" x2="538.7" y2="671.1" stroke="#a3a8b8" stroke-width="1"/>
<line x1="557.1" y1="668.1" x2="557.1" y2="671.1" stroke="#a3a8b8" stroke-width="1"/>
<line x1="575.4" y1="668.1" x2="575.4" y2="671.1" stroke="#a3a8b8" stroke-width="1"/>
<line x1="593.8" y1="668.1" x2="593.8" y2="673.1" stroke="#a3a8b8" stroke-width="1"/>
<line x1="612.2" y1="668.1" x2="612.2" y2="671.1" stroke="#a3a8b8" stroke-width="1"/>
<line x1="630.6" y1="668.1" x2="630.6" y2="671.1" stroke="#a3a8b8" stroke-width="1"/>
<line x1="649.0" y1="668.1" x2="649.0" y2="671.1" stroke="#a3a8b8" stroke-width="1"/>
<line x1="667.4" y1="668.1" x2="667.4" y2="671.1" stroke="#a3a8b8" stroke-width="1"/>
<line x1="685.7" y1="668.1" x2="685.7" y2="673.1" stroke="#a3a8b8" stroke-width="1"/>
<line x1="704.1" y1="668.1" x2="704.1" y2="671.1" stroke="#a3a8b8" stroke-width="1"/>
<line x1="722.5" y1="668.1" x2="722.5" y2="671.1" stroke="#a3a8b8" stroke-width="1"/>
<line x1="740.9" y1="668.1" x2="740.9" y2="671.1" stroke="#a3a8b8" stroke-width="1"/>
<line x1="759.3" y1="668.1" x2="759.3" y2="671.1" stroke="#a3a8b8" stroke-width="1"/>
<line x1="777.7" y1="668.1" x2="777.7" y2="673.1" stroke="#a3a8b8" stroke-width="1"/>
<line x1="796.0" y1="668.1" x2="796.0" y2="671.1" stroke="#a3a8b8" stroke-width="1"/>
<line x1="814.4" y1="668.1" x2="814.4" y2="671.1" stroke="#a3a8b8" stroke-width="1"/>
<line x1="832.8" y1="668.1" x2="832.8" y2="671.1" stroke="#a3a8b8" stroke-width="1"/>
<line x1="851.2" y1="668.1" x2="851.2" y2="671.1" stroke="#a3a8b8" stroke-width="1"/>
<line x1="869.6" y1="668.1" x2="869.6" y2="673.1" stroke="#a3a8b8" stroke-width="1"/>
<line x1="888.0" y1="668.1" x2="888.0" y2="671.1" stroke="#a3a8b8" stroke-width="1"/>
<line x1="906.3" y1="668.1" x2="906.3" y2="671.1" stroke="#a3a8b8" stroke-width="1"/>
<line x1="924.7" y1="668.1" x2="924.7" y2="671.1" stroke="#a3a8b8" stroke-width="1"/>
<line x1="943.1" y1="668.1" x2="943.1" y2="671.1" stroke="#a3a8b8" stroke-width="1"/>
<line x1="961.5" y1="668.1" x2="961.5" y2="673.1" stroke="#a3a8b8" stroke-width="1"/>
<line x1="979.9" y1="668.1" x2="979.9" y2="671.1" stroke="#a3a8b8" stroke-width="1"/>
<line x1="998.3" y1="668.1" x2="998.3" y2="671.1" stroke="#a3a8b8" stroke-width="1"/>
<line x1="1016.7" y1="668.1" x2="1016.7" y2="671.1" stroke="#a3a8b8" stroke-width="1"/>
<line x1="1035.0" y1="668.1" x2="1035.0" y2="671.1" stroke="#a3a8b8" stroke-width="1"/>
<line x1="1053.4" y1="668.1" x2="1053.4" y2="673.1" stroke="#a3a8b8" stroke-width="1"/>
<line x1="1071.8" y1="668.1" x2="1071.8" y2="671.1" stroke="#a3a8b8" stroke-width="1"/>
<line x1="1090.2" y1="668.1" x2="1090.2" y2="671.1" stroke="#a3a8b8" stroke-width="1"/>
<line x1="1108.6" y1="668.1" x2="1108.6" y2="671.1" stroke="#a3a8b8" stroke-width="1"/>
<line x1="1127.0" y1="668.1" x2="1127.0" y2="671.1" stroke="#a3a8b8" stroke-width="1"/>
<line x1="1145.3" y1="668.1" x2="1145.3" y2="673.1" stroke="#a3a8b8" stroke-width="1"/>
<line x1="1163.7" y1="668.1" x2="1163.7" y2="671.1" stroke="#a3a8b8" stroke-width="1"/>
<line x1="1182.1" y1="668.1" x2="1182.1" y2="671.1" stroke="#a3a8b8" stroke-width="1"/>
<line x1="1200.5" y1="668.1" x2="1200.5" y2="671.1" stroke="#a3a8b8" stroke-width="1"/>
<line x1="1218.9" y1="668.1" x2="1218.9" y2="671.1" stroke="#a3a8b8" stroke-width="1"/>
<line x1="1237.3" y1="668.1" x2="1237.3" y2="673.1" stroke="#a3a8b8" stroke-width="1"/>
<line x1="1255.6" y1="668.1" x2="1255.6" y2="671.1" stroke="#a3a8b8" stroke-width="1"/>
<line x1="1274.0" y1="668.1" x2="1274.0" y2="671.1" stroke="#a3a8b8" stroke-width="1"/>
<line x1="1292.4" y1="668.1" x2="1292.4" y2="671.1" stroke="#a3a8b8" stroke-width="1"/>
<line x1="1310.8" y1="668.1" x2="1310.8" y2="671.1" stroke="#a3a8b8" stroke-width="1"/>
<line x1="1329.2" y1="668.1" x2="1329.2" y2="673.1" stroke="#a3a8b8" stroke-width="1"/>
<line x1="1347.6" y1="668.1" x2="1347.6" y2="671.1" stroke="#a3a8b8" stroke-width="1"/>
<line x1="1365.9" y1="668.1" x2="1365.9" y2="671.1" stroke="#a3a8b8" stroke-width="1"/>
<line x1="1384.3" y1="668.1" x2="1384.3" y2="671.1" stroke="#a3a8b8" stroke-width="1"/>
<line x1="1402.7" y1="668.1" x2="1402.7" y2="671.1" stroke="#a3a8b8" stroke-width="1"/>
<line x1="1421.1" y1="668.1" x2="1421.1" y2="673.1" stroke="#a3a8b8" stroke-width="1"/>
<line x1="1439.5" y1="668.1" x2="1439.5" y2="671.1" stroke="#a3a8b8" stroke-width="1"/>
<line x1="1457.9" y1="668.1" x2="1457.9" y2="671.1" stroke="#a3a8b8" stroke-width="1"/>
<line x1="1476.3" y1="668.1" x2="1476.3" y2="671.1" stroke="#a3a8b8" stroke-width="1"/>
<line x1="1494.6" y1="668.1" x2="1494.6" y2="671.1" stroke="#a3a8b8" stroke-width="1"/>
<line x1="1513.0" y1="668.1" x2="1513.0" y2="673.1" stroke="#a3a8b8" stroke-width="1"/>
<line x1="1531.4" y1="668.1" x2="1531.4" y2="671.1" stroke="#a3a8b8" stroke-width="1"/>
<line x1="1549.8" y1="668.1" x2="1549.8" y2="671.1" stroke="#a3a8b8" stroke-width="1"/>
<line x1="1568.2" y1="668.1" x2="1568.2" y2="671.1" stroke="#a3a8b8" stroke-width="1"/>
<line x1="1586.6" y1="668.1" x2="1586.6" y2="671.1" stroke="#a3a8b8" stroke-width="1"/>
<line x1="1604.9" y1="668.1" x2="1604.9" y2="673.1" stroke="#a3a8b8" stroke-width="1"/>
<line x1="1623.3" y1="668.1" x2="1623.3" y2="671.1" stroke="#a3a8b8" stroke-width="1"/>
<line x1="1641.7" y1="668.1" x2="1641.7" y2="671.1" stroke="#a3a8b8" stroke-width="1"/>
<text x="16.7" y="684.0" font-size="11" fill="#9a9eab" font-weight="normal" text-anchor="start" textLength="52.0" lengthAdjust="spacingAndGlyphs">18/07/2021</text>
<text x="108.2" y="684.0" font-size="11" fill="#9a9eab" font-weight="normal" text-anchor="start" textLength="53.6" lengthAdjust="spacingAndGlyphs">20/07/2021</text>
<text x="199.6" y="684.0" font-size="11" fill="#9a9eab" font-weight="normal" text-anchor="start" textLength="53.7" lengthAdjust="spacingAndGlyphs">22/07/2021</text>
<text x="291.4" y="684.0" font-size="11" fill="#9a9eab" font-weight="normal" text-anchor="start" textLength="54.0" lengthAdjust="spacingAndGlyphs">24/07/2021</text>
<text x="384.0" y="684.0" font-size="11" fill="#9a9eab" font-weight="normal" text-anchor="start" textLength="53.4" lengthAdjust="spacingAndGlyphs">26/07/2021</text>
<text x="476.0" y="684.0" font-size="11" fill="#9a9eab" font-weight="normal" text-anchor="start" textLength="53.5" lengthAdjust="spacingAndGlyphs">28/07/2021</text>
<text x="567.6" y="684.0" font-size="11" fill="#9a9eab" font-weight="normal" text-anchor="start" textLength="53.7" lengthAdjust="spacingAndGlyphs">30/07/2021</text>
<text x="659.9" y="684.0" font-size="11" fill="#9a9eab" font-weight="normal" text-anchor="start" textLength="52.9" lengthAdjust="spacingAndGlyphs">01/08/2021</text>
<text x="750.8" y="684.0" font-size="11" fill="#9a9eab" font-weight="normal" text-anchor="start" textLength="55.1" lengthAdjust="spacingAndGlyphs">03/08/2021</text>
<text x="841.7" y="684.0" font-size="11" fill="#9a9eab" font-weight="normal" text-anchor="start" textLength="55.4" lengthAdjust="spacingAndGlyphs">05/08/2021</text>
<text x="934.0" y="684.0" font-size="11" fill="#9a9eab" font-weight="normal" text-anchor="start" textLength="55.0" lengthAdjust="spacingAndGlyphs">07/08/2021</text>
<text x="1026.0" y="684.0" font-size="11" fill="#9a9eab" font-weight="normal" text-anchor="start" textLength="55.2" lengthAdjust="spacingAndGlyphs">09/08/2021</text>
<text x="1120.9" y="684.0" font-size="11" fill="#9a9eab" font-weight="normal" text-anchor="start" textLength="49.5" lengthAdjust="spacingAndGlyphs">11/08/2021</text>
<text x="1212.3" y="684.0" font-size="11" fill="#9a9eab" font-weight="normal" text-anchor="start" textLength="51.2" lengthAdjust="spacingAndGlyphs">13/08/2021</text>
<text x="1303.8" y="684.0" font-size="11" fill="#9a9eab" font-weight="normal" text-anchor="start" textLength="51.5" lengthAdjust="spacingAndGlyphs">15/08/2021</text>
<text x="1395.9" y="684.0" font-size="11" fill="#9a9eab" font-weight="normal" text-anchor="start" textLength="51.8" lengthAdjust="spacingAndGlyphs">17/08/2021</text>
<text x="1487.3" y="684.0" font-size="11" fill="#9a9eab" font-weight="normal" text-anchor="start" textLength="52.0" lengthAdjust="spacingAndGlyphs">19/08/2021</text>
<text x="1579.4" y="684.0" font-size="11" fill="#9a9eab" font-weight="normal" text-anchor="start" textLength="52.2" lengthAdjust="spacingAndGlyphs">21/08/2021</text>
<polyline points="132.9,609.2 178.9,544.3 224.9,587.9 270.9,599.9 316.9,589.6 362.9,585.3 408.8,610.4 454.8,590.9 500.8,519.9 546.8,568.2 592.8,587.6 638.8,571.3 684.8,544.3 730.8,593.9 776.8,612.3 822.8,540.1 868.7,596.7 914.7,595.9 960.7,585.3 1006.7,587.4 1052.7,607.2 1098.7,577.5 1144.7,516.1 1190.7,578.3 1236.7,571.3 1282.7,558.2 1328.6,559.9 1374.6,586.4 1420.6,599.7 1466.6,533.0 1512.6,583.3 1558.6,653.8" fill="none" stroke="#b0cb3a" stroke-width="2.1" stroke-linejoin="round"/>

<text x="6.3" y="725.8" font-size="16.5" fill="#e8e8ef" font-weight="normal" text-anchor="start" textLength="130.9" lengthAdjust="spacingAndGlyphs" stroke="#e8e8ef" stroke-width="0.1">Wait Ocurrences</text>
<line x1="39.0" y1="741" x2="39.0" y2="907.1" stroke="#a3a8b8" stroke-width="1.2"/>
<line x1="36.5" y1="751.2" x2="39.0" y2="751.2" stroke="#a3a8b8" stroke-width="1"/>
<line x1="36.5" y1="766.9" x2="39.0" y2="766.9" stroke="#a3a8b8" stroke-width="1"/>
<line x1="36.5" y1="782.7" x2="39.0" y2="782.7" stroke="#a3a8b8" stroke-width="1"/>
<line x1="36.5" y1="798.4" x2="39.0" y2="798.4" stroke="#a3a8b8" stroke-width="1"/>
<line x1="36.5" y1="814.2" x2="39.0" y2="814.2" stroke="#a3a8b8" stroke-width="1"/>
<line x1="36.5" y1="829.9" x2="39.0" y2="829.9" stroke="#a3a8b8" stroke-width="1"/>
<line x1="36.5" y1="845.6" x2="39.0" y2="845.6" stroke="#a3a8b8" stroke-width="1"/>
<line x1="36.5" y1="861.4" x2="39.0" y2="861.4" stroke="#a3a8b8" stroke-width="1"/>
<line x1="36.5" y1="877.1" x2="39.0" y2="877.1" stroke="#a3a8b8" stroke-width="1"/>
<line x1="36.5" y1="892.9" x2="39.0" y2="892.9" stroke="#a3a8b8" stroke-width="1"/>
<line x1="34.0" y1="814.8" x2="39.0" y2="814.8" stroke="#a3a8b8" stroke-width="1.2"/>
<text x="23.6" y="817.8" font-size="10.5" fill="#9a9eab" font-weight="normal" text-anchor="start" textLength="6.0" lengthAdjust="spacingAndGlyphs">3</text>
<line x1="34.0" y1="893.5" x2="39.0" y2="893.5" stroke="#a3a8b8" stroke-width="1.2"/>
<text x="23.6" y="896.5" font-size="10.5" fill="#9a9eab" font-weight="normal" text-anchor="start" textLength="6.0" lengthAdjust="spacingAndGlyphs">2</text>
<line x1="39.0" y1="907.1" x2="1655" y2="907.1" stroke="#a3a8b8" stroke-width="1.4"/>
<line x1="42.3" y1="907.1" x2="42.3" y2="912.1" stroke="#a3a8b8" stroke-width="1"/>
<line x1="60.7" y1="907.1" x2="60.7" y2="910.1" stroke="#a3a8b8" stroke-width="1"/>
<line x1="79.1" y1="907.1" x2="79.1" y2="910.1" stroke="#a3a8b8" stroke-width="1"/>
<line x1="97.5" y1="907.1" x2="97.5" y2="910.1" stroke="#a3a8b8" stroke-width="1"/>
<line x1="115.8" y1="907.1" x2="115.8" y2="910.1" stroke="#a3a8b8" stroke-width="1"/>
<line x1="134.2" y1="907.1" x2="134.2" y2="912.1" stroke="#a3a8b8" stroke-width="1"/>
<line x1="152.6" y1="907.1" x2="152.6" y2="910.1" stroke="#a3a8b8" stroke-width="1"/>
<line x1="171.0" y1="907.1" x2="171.0" y2="910.1" stroke="#a3a8b8" stroke-width="1"/>
<line x1="189.4" y1="907.1" x2="189.4" y2="910.1" stroke="#a3a8b8" stroke-width="1"/>
<line x1="207.8" y1="907.1" x2="207.8" y2="910.1" stroke="#a3a8b8" stroke-width="1"/>
<line x1="226.1" y1="907.1" x2="226.1" y2="912.1" stroke="#a3a8b8" stroke-width="1"/>
<line x1="244.5" y1="907.1" x2="244.5" y2="910.1" stroke="#a3a8b8" stroke-width="1"/>
<line x1="262.9" y1="907.1" x2="262.9" y2="910.1" stroke="#a3a8b8" stroke-width="1"/>
<line x1="281.3" y1="907.1" x2="281.3" y2="910.1" stroke="#a3a8b8" stroke-width="1"/>
<line x1="299.7" y1="907.1" x2="299.7" y2="910.1" stroke="#a3a8b8" stroke-width="1"/>
<line x1="318.1" y1="907.1" x2="318.1" y2="912.1" stroke="#a3a8b8" stroke-width="1"/>
<line x1="336.4" y1="907.1" x2="336.4" y2="910.1" stroke="#a3a8b8" stroke-width="1"/>
<line x1="354.8" y1="907.1" x2="354.8" y2="910.1" stroke="#a3a8b8" stroke-width="1"/>
<line x1="373.2" y1="907.1" x2="373.2" y2="910.1" stroke="#a3a8b8" stroke-width="1"/>
<line x1="391.6" y1="907.1" x2="391.6" y2="910.1" stroke="#a3a8b8" stroke-width="1"/>
<line x1="410.0" y1="907.1" x2="410.0" y2="912.1" stroke="#a3a8b8" stroke-width="1"/>
<line x1="428.4" y1="907.1" x2="428.4" y2="910.1" stroke="#a3a8b8" stroke-width="1"/>
<line x1="446.7" y1="907.1" x2="446.7" y2="910.1" stroke="#a3a8b8" stroke-width="1"/>
<line x1="465.1" y1="907.1" x2="465.1" y2="910.1" stroke="#a3a8b8" stroke-width="1"/>
<line x1="483.5" y1="907.1" x2="483.5" y2="910.1" stroke="#a3a8b8" stroke-width="1"/>
<line x1="501.9" y1="907.1" x2="501.9" y2="912.1" stroke="#a3a8b8" stroke-width="1"/>
<line x1="520.3" y1="907.1" x2="520.3" y2="910.1" stroke="#a3a8b8" stroke-width="1"/>
<line x1="538.7" y1="907.1" x2="538.7" y2="910.1" stroke="#a3a8b8" stroke-width="1"/>
<line x1="557.1" y1="907.1" x2="557.1" y2="910.1" stroke="#a3a8b8" stroke-width="1"/>
<line x1="575.4" y1="907.1" x2="575.4" y2="910.1" stroke="#a3a8b8" stroke-width="1"/>
<line x1="593.8" y1="907.1" x2="593.8" y2="912.1" stroke="#a3a8b8" stroke-width="1"/>
<line x1="612.2" y1="907.1" x2="612.2" y2="910.1" stroke="#a3a8b8" stroke-width="1"/>
<line x1="630.6" y1="907.1" x2="630.6" y2="910.1" stroke="#a3a8b8" stroke-width="1"/>
<line x1="649.0" y1="907.1" x2="649.0" y2="910.1" stroke="#a3a8b8" stroke-width="1"/>
<line x1="667.4" y1="907.1" x2="667.4" y2="910.1" stroke="#a3a8b8" stroke-width="1"/>
<line x1="685.7" y1="907.1" x2="685.7" y2="912.1" stroke="#a3a8b8" stroke-width="1"/>
<line x1="704.1" y1="907.1" x2="704.1" y2="910.1" stroke="#a3a8b8" stroke-width="1"/>
<line x1="722.5" y1="907.1" x2="722.5" y2="910.1" stroke="#a3a8b8" stroke-width="1"/>
<line x1="740.9" y1="907.1" x2="740.9" y2="910.1" stroke="#a3a8b8" stroke-width="1"/>
<line x1="759.3" y1="907.1" x2="759.3" y2="910.1" stroke="#a3a8b8" stroke-width="1"/>
<line x1="777.7" y1="907.1" x2="777.7" y2="912.1" stroke="#a3a8b8" stroke-width="1"/>
<line x1="796.0" y1="907.1" x2="796.0" y2="910.1" stroke="#a3a8b8" stroke-width="1"/>
<line x1="814.4" y1="907.1" x2="814.4" y2="910.1" stroke="#a3a8b8" stroke-width="1"/>
<line x1="832.8" y1="907.1" x2="832.8" y2="910.1" stroke="#a3a8b8" stroke-width="1"/>
<line x1="851.2" y1="907.1" x2="851.2" y2="910.1" stroke="#a3a8b8" stroke-width="1"/>
<line x1="869.6" y1="907.1" x2="869.6" y2="912.1" stroke="#a3a8b8" stroke-width="1"/>
<line x1="888.0" y1="907.1" x2="888.0" y2="910.1" stroke="#a3a8b8" stroke-width="1"/>
<line x1="906.3" y1="907.1" x2="906.3" y2="910.1" stroke="#a3a8b8" stroke-width="1"/>
<line x1="924.7" y1="907.1" x2="924.7" y2="910.1" stroke="#a3a8b8" stroke-width="1"/>
<line x1="943.1" y1="907.1" x2="943.1" y2="910.1" stroke="#a3a8b8" stroke-width="1"/>
<line x1="961.5" y1="907.1" x2="961.5" y2="912.1" stroke="#a3a8b8" stroke-width="1"/>
<line x1="979.9" y1="907.1" x2="979.9" y2="910.1" stroke="#a3a8b8" stroke-width="1"/>
<line x1="998.3" y1="907.1" x2="998.3" y2="910.1" stroke="#a3a8b8" stroke-width="1"/>
<line x1="1016.7" y1="907.1" x2="1016.7" y2="910.1" stroke="#a3a8b8" stroke-width="1"/>
<line x1="1035.0" y1="907.1" x2="1035.0" y2="910.1" stroke="#a3a8b8" stroke-width="1"/>
<line x1="1053.4" y1="907.1" x2="1053.4" y2="912.1" stroke="#a3a8b8" stroke-width="1"/>
<line x1="1071.8" y1="907.1" x2="1071.8" y2="910.1" stroke="#a3a8b8" stroke-width="1"/>
<line x1="1090.2" y1="907.1" x2="1090.2" y2="910.1" stroke="#a3a8b8" stroke-width="1"/>
<line x1="1108.6" y1="907.1" x2="1108.6" y2="910.1" stroke="#a3a8b8" stroke-width="1"/>
<line x1="1127.0" y1="907.1" x2="1127.0" y2="910.1" stroke="#a3a8b8" stroke-width="1"/>
<line x1="1145.3" y1="907.1" x2="1145.3" y2="912.1" stroke="#a3a8b8" stroke-width="1"/>
<line x1="1163.7" y1="907.1" x2="1163.7" y2="910.1" stroke="#a3a8b8" stroke-width="1"/>
<line x1="1182.1" y1="907.1" x2="1182.1" y2="910.1" stroke="#a3a8b8" stroke-width="1"/>
<line x1="1200.5" y1="907.1" x2="1200.5" y2="910.1" stroke="#a3a8b8" stroke-width="1"/>
<line x1="1218.9" y1="907.1" x2="1218.9" y2="910.1" stroke="#a3a8b8" stroke-width="1"/>
<line x1="1237.3" y1="907.1" x2="1237.3" y2="912.1" stroke="#a3a8b8" stroke-width="1"/>
<line x1="1255.6" y1="907.1" x2="1255.6" y2="910.1" stroke="#a3a8b8" stroke-width="1"/>
<line x1="1274.0" y1="907.1" x2="1274.0" y2="910.1" stroke="#a3a8b8" stroke-width="1"/>
<line x1="1292.4" y1="907.1" x2="1292.4" y2="910.1" stroke="#a3a8b8" stroke-width="1"/>
<line x1="1310.8" y1="907.1" x2="1310.8" y2="910.1" stroke="#a3a8b8" stroke-width="1"/>
<line x1="1329.2" y1="907.1" x2="1329.2" y2="912.1" stroke="#a3a8b8" stroke-width="1"/>
<line x1="1347.6" y1="907.1" x2="1347.6" y2="910.1" stroke="#a3a8b8" stroke-width="1"/>
<line x1="1365.9" y1="907.1" x2="1365.9" y2="910.1" stroke="#a3a8b8" stroke-width="1"/>
<line x1="1384.3" y1="907.1" x2="1384.3" y2="910.1" stroke="#a3a8b8" stroke-width="1"/>
<line x1="1402.7" y1="907.1" x2="1402.7" y2="910.1" stroke="#a3a8b8" stroke-width="1"/>
<line x1="1421.1" y1="907.1" x2="1421.1" y2="912.1" stroke="#a3a8b8" stroke-width="1"/>
<line x1="1439.5" y1="907.1" x2="1439.5" y2="910.1" stroke="#a3a8b8" stroke-width="1"/>
<line x1="1457.9" y1="907.1" x2="1457.9" y2="910.1" stroke="#a3a8b8" stroke-width="1"/>
<line x1="1476.3" y1="907.1" x2="1476.3" y2="910.1" stroke="#a3a8b8" stroke-width="1"/>
<line x1="1494.6" y1="907.1" x2="1494.6" y2="910.1" stroke="#a3a8b8" stroke-width="1"/>
<line x1="1513.0" y1="907.1" x2="1513.0" y2="912.1" stroke="#a3a8b8" stroke-width="1"/>
<line x1="1531.4" y1="907.1" x2="1531.4" y2="910.1" stroke="#a3a8b8" stroke-width="1"/>
<line x1="1549.8" y1="907.1" x2="1549.8" y2="910.1" stroke="#a3a8b8" stroke-width="1"/>
<line x1="1568.2" y1="907.1" x2="1568.2" y2="910.1" stroke="#a3a8b8" stroke-width="1"/>
<line x1="1586.6" y1="907.1" x2="1586.6" y2="910.1" stroke="#a3a8b8" stroke-width="1"/>
<line x1="1604.9" y1="907.1" x2="1604.9" y2="912.1" stroke="#a3a8b8" stroke-width="1"/>
<line x1="1623.3" y1="907.1" x2="1623.3" y2="910.1" stroke="#a3a8b8" stroke-width="1"/>
<line x1="1641.7" y1="907.1" x2="1641.7" y2="910.1" stroke="#a3a8b8" stroke-width="1"/>
<text x="16.7" y="923.0" font-size="11" fill="#9a9eab" font-weight="normal" text-anchor="start" textLength="52.0" lengthAdjust="spacingAndGlyphs">18/07/2021</text>
<text x="108.2" y="923.0" font-size="11" fill="#9a9eab" font-weight="normal" text-anchor="start" textLength="53.6" lengthAdjust="spacingAndGlyphs">20/07/2021</text>
<text x="199.6" y="923.0" font-size="11" fill="#9a9eab" font-weight="normal" text-anchor="start" textLength="53.7" lengthAdjust="spacingAndGlyphs">22/07/2021</text>
<text x="291.4" y="923.0" font-size="11" fill="#9a9eab" font-weight="normal" text-anchor="start" textLength="54.0" lengthAdjust="spacingAndGlyphs">24/07/2021</text>
<text x="384.0" y="923.0" font-size="11" fill="#9a9eab" font-weight="normal" text-anchor="start" textLength="53.4" lengthAdjust="spacingAndGlyphs">26/07/2021</text>
<text x="476.0" y="923.0" font-size="11" fill="#9a9eab" font-weight="normal" text-anchor="start" textLength="53.5" lengthAdjust="spacingAndGlyphs">28/07/2021</text>
<text x="567.6" y="923.0" font-size="11" fill="#9a9eab" font-weight="normal" text-anchor="start" textLength="53.7" lengthAdjust="spacingAndGlyphs">30/07/2021</text>
<text x="659.9" y="923.0" font-size="11" fill="#9a9eab" font-weight="normal" text-anchor="start" textLength="52.9" lengthAdjust="spacingAndGlyphs">01/08/2021</text>
<text x="750.8" y="923.0" font-size="11" fill="#9a9eab" font-weight="normal" text-anchor="start" textLength="55.1" lengthAdjust="spacingAndGlyphs">03/08/2021</text>
<text x="841.7" y="923.0" font-size="11" fill="#9a9eab" font-weight="normal" text-anchor="start" textLength="55.4" lengthAdjust="spacingAndGlyphs">05/08/2021</text>
<text x="934.0" y="923.0" font-size="11" fill="#9a9eab" font-weight="normal" text-anchor="start" textLength="55.0" lengthAdjust="spacingAndGlyphs">07/08/2021</text>
<text x="1026.0" y="923.0" font-size="11" fill="#9a9eab" font-weight="normal" text-anchor="start" textLength="55.2" lengthAdjust="spacingAndGlyphs">09/08/2021</text>
<text x="1120.9" y="923.0" font-size="11" fill="#9a9eab" font-weight="normal" text-anchor="start" textLength="49.5" lengthAdjust="spacingAndGlyphs">11/08/2021</text>
<text x="1212.3" y="923.0" font-size="11" fill="#9a9eab" font-weight="normal" text-anchor="start" textLength="51.2" lengthAdjust="spacingAndGlyphs">13/08/2021</text>
<text x="1303.8" y="923.0" font-size="11" fill="#9a9eab" font-weight="normal" text-anchor="start" textLength="51.5" lengthAdjust="spacingAndGlyphs">15/08/2021</text>
<text x="1395.9" y="923.0" font-size="11" fill="#9a9eab" font-weight="normal" text-anchor="start" textLength="51.8" lengthAdjust="spacingAndGlyphs">17/08/2021</text>
<text x="1487.3" y="923.0" font-size="11" fill="#9a9eab" font-weight="normal" text-anchor="start" textLength="52.0" lengthAdjust="spacingAndGlyphs">19/08/2021</text>
<text x="1579.4" y="923.0" font-size="11" fill="#9a9eab" font-weight="normal" text-anchor="start" textLength="52.2" lengthAdjust="spacingAndGlyphs">21/08/2021</text>
<polyline points="132.9,880.0 178.9,869.6 224.9,886.2 270.9,867.6 316.9,877.7 362.9,888.5 408.8,890.5 454.8,893.3 500.8,868.9 546.8,859.3 592.8,861.3 638.8,863.9 684.8,756.2 730.8,884.0 776.8,879.0 822.8,860.1 868.7,856.3 914.7,852.3 960.7,824.8 1006.7,860.1 1052.7,885.2 1098.7,884.7 1144.7,875.2 1190.7,856.3 1236.7,841.7 1282.7,831.6 1328.6,854.3 1374.6,875.9 1420.6,868.1 1466.6,861.8 1512.6,857.6 1558.6,819.8" fill="none" stroke="#28afe2" stroke-width="2.1" stroke-linejoin="round"/>

<path d="M505.5,92 L505.5,111 L509.8,107.6 L513.2,114.4 L516.4,112.9 L513.2,106.6 L519.6,106.6 Z" fill="#ffffff" stroke="#000000" stroke-width="1.1" stroke-linejoin="miter"/>
</svg>
<div class="abs" id="lb"></div><div class="abs" id="rb"></div>
</body></html>
